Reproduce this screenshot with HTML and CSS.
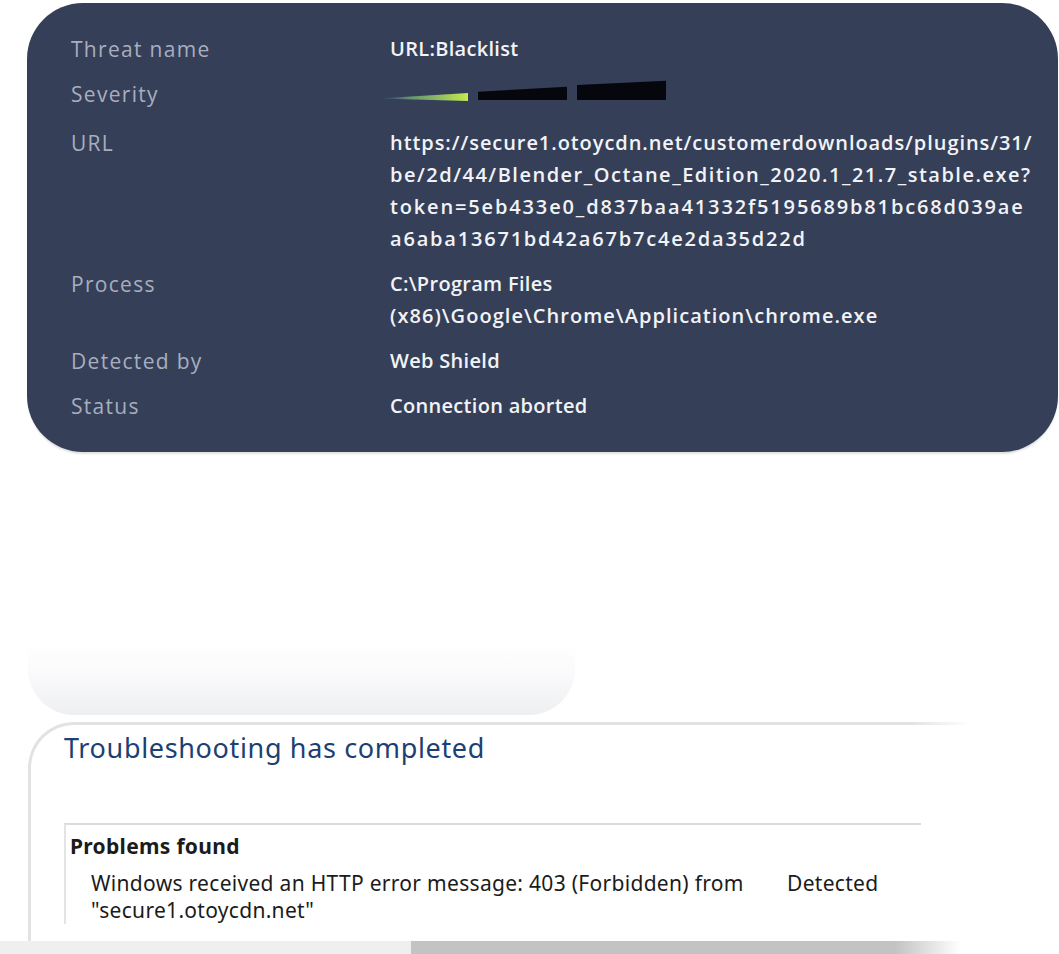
FILE: index.html
```html
<!DOCTYPE html>
<html>
<head>
<meta charset="utf-8">
<link rel="stylesheet" href="styles.css">
</head>
<body>
<section class="threat">
  <div class="row"><div class="label">Threat name</div><div class="value">URL:Blacklist</div></div>
  <div class="row sev"><div class="label">Severity</div>
    <div class="value">
      <svg class="sevbar" width="300" height="36" viewBox="0 0 300 36">
        <defs>
          <linearGradient id="g" x1="0" x2="1" y1="0" y2="0">
            <stop offset="0" stop-color="#5f7fa0" stop-opacity="0"/>
            <stop offset="0.35" stop-color="#72b07a" stop-opacity="0.75"/>
            <stop offset="1" stop-color="#c6ec4c"/>
          </linearGradient>
        </defs>
        <polygon points="8,20.5 98,15 98,23" fill="url(#g)"/>
        <polygon points="108,13.7 197,8.7 197,22 108,22" fill="#05070c"/>
        <polygon points="207,7 296,2.7 296,22 207,22" fill="#05070c"/>
      </svg>
    </div>
  </div>
  <div class="row"><div class="label">URL</div>
    <div class="value">
      <span class="ln url1">https://secure1.otoycdn.net/customerdownloads/plugins/31/</span>
      <span class="ln url2">be/2d/44/Blender_Octane_Edition_2020.1_21.7_stable.exe?</span>
      <span class="ln url3">token=5eb433e0_d837baa41332f5195689b81bc68d039ae</span>
      <span class="ln url4">a6aba13671bd42a67b7c4e2da35d22d</span>
    </div>
  </div>
  <div class="row"><div class="label">Process</div>
    <div class="value">
      <span class="ln">C:\Program Files</span>
      <span class="ln path2">(x86)\Google\Chrome\Application\chrome.exe</span>
    </div>
  </div>
  <div class="row"><div class="label">Detected by</div><div class="value">Web Shield</div></div>
  <div class="row"><div class="label">Status</div><div class="value">Connection aborted</div></div>
</section>

<div class="ghost"></div>

<section class="trouble">
  <h1 class="title">Troubleshooting has completed</h1>
  <div class="problems">
    <div class="phead">Problems found</div>
    <div class="prow">
      <div class="pdesc">Windows received an HTTP error message: 403 (Forbidden) from<br>"secure1.otoycdn.net"</div>
      <div class="pstat">Detected</div>
    </div>
  </div>
</section>

<div class="bottombar">
  <div class="seg-light"></div>
  <div class="seg-dark"></div>
</div>
</body>
</html>
```
FILE: styles.css
```css
html, body {
  margin: 0;
  padding: 0;
  background: #ffffff;
  height: 954px;
  overflow: hidden;
}

.threat {
  margin: 3px 0 0 27px;
  width: 1031px;
  box-sizing: border-box;
  height: 449px;
  padding: 30px 0 0 44px;
  background: #363f58;
  border-radius: 56px;
  box-shadow: 0 3px 2px -1px rgba(0, 0, 0, 0.12);
  display: flex;
  flex-direction: column;
  gap: 13px;
  font-family: "Open Sans", "Noto Sans", sans-serif;
  font-size: 20px;
  line-height: 32px;
}

.row {
  display: grid;
  grid-template-columns: 319px 1fr;
}

.sev {
  height: 36px;
}

.label {
  color: #a7aebf;
  font-size: 21px;
  letter-spacing: 1.3px;
}

.value {
  color: #f1f3f7;
  font-weight: 600;
  letter-spacing: 0.3px;
}

.ln {
  display: block;
  white-space: nowrap;
}

.url1 { letter-spacing: 0.93px; }
.url2 { letter-spacing: 1.5px; }
.url3 { letter-spacing: 1.85px; }
.url4 { letter-spacing: 1.8px; }
.path2 { letter-spacing: 1.04px; }

.sevbar {
  display: block;
  margin-left: -20px;
}

.ghost {
  margin: 188px 0 0 28px;
  width: 547px;
  height: 75px;
  border-radius: 0 0 46px 46px;
  background: linear-gradient(#ffffff 0%, #fbfbfc 40%, #eeeff1 100%);
}

.trouble {
  position: relative;
  margin: 7px 0 0 28px;
  width: 942px;
  height: 219px;
  box-sizing: border-box;
  border-top: 3px solid #e2e2e2;
  border-left: 3px solid #e2e2e2;
  border-top-left-radius: 46px;
  padding: 6px 0 0 33px;
  font-family: "Noto Sans", "Open Sans", sans-serif;
}

.trouble::after {
  content: "";
  position: absolute;
  top: -3px;
  right: -60px;
  width: 120px;
  height: 3px;
  background: linear-gradient(90deg, rgba(255,255,255,0), #ffffff 50%);
}

.title {
  margin: 0;
  font-weight: 400;
  font-size: 27px;
  line-height: 34px;
  color: #1d3f73;
  letter-spacing: 0.65px;
}

.problems {
  margin-top: 58px;
  width: 851px;
  border-top: 2px solid #dcdcdc;
  border-left: 2px solid #e4e4e4;
  padding: 9px 0 0 4px;
  color: #1b1b1b;
  font-size: 21px;
}

.phead {
  font-weight: 700;
  line-height: 24px;
  letter-spacing: 0.3px;
}

.prow {
  display: flex;
  margin-top: 12px;
  padding-left: 21px;
  line-height: 27px;
  letter-spacing: 0.3px;
}

.pdesc {
  width: 696px;
}

.bottombar {
  display: flex;
  height: 13px;
}

.seg-light {
  width: 411px;
  background: #efefef;
}

.seg-dark {
  width: 550px;
  background: linear-gradient(90deg, #c3c3c3 0%, #c3c3c3 88%, #ffffff 100%);
}
```
